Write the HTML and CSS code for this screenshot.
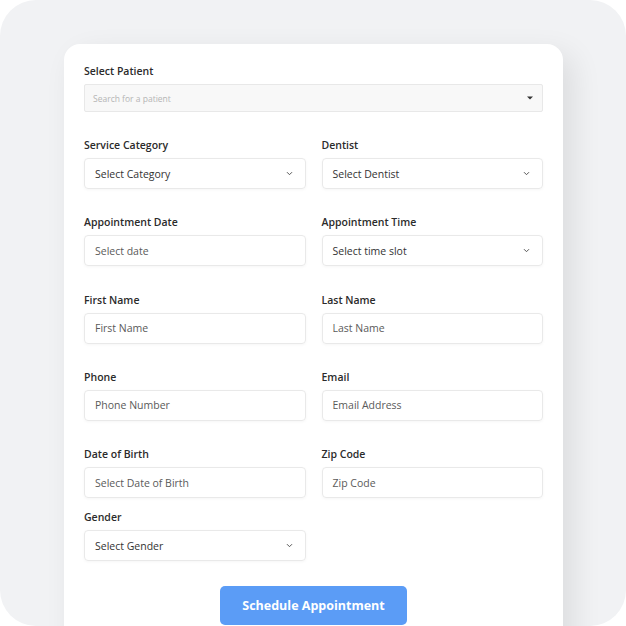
FILE: index.html
```html
<!DOCTYPE html>
<html lang="en">
<head>
  <meta charset="UTF-8">
  <title>Book Appointment</title>
  <link rel="stylesheet" href="styles.css">
</head>
<body>
  <div class="frame">
    <div class="card">
      <div class="field">
        <label>Select Patient</label>
        <div class="search-box">
          <span>Search for a patient</span>
          <svg width="6" height="4" viewBox="0 0 6 4"><path d="M0 0.5h6L3 3.5z" fill="#333"/></svg>
        </div>
      </div>

      <div class="grid">
        <div class="field">
          <label>Service Category</label>
          <div class="box select">
            <span>Select Category</span>
            <svg width="7" height="5" viewBox="0 0 7 5"><path d="M1 1.2l2.5 2.5 2.5-2.5" fill="none" stroke="#555" stroke-width="1"/></svg>
          </div>
        </div>
        <div class="field">
          <label>Dentist</label>
          <div class="box select">
            <span>Select Dentist</span>
            <svg width="7" height="5" viewBox="0 0 7 5"><path d="M1 1.2l2.5 2.5 2.5-2.5" fill="none" stroke="#555" stroke-width="1"/></svg>
          </div>
        </div>

        <div class="field">
          <label>Appointment Date</label>
          <div class="box"><span>Select date</span></div>
        </div>
        <div class="field">
          <label>Appointment Time</label>
          <div class="box select">
            <span>Select time slot</span>
            <svg width="7" height="5" viewBox="0 0 7 5"><path d="M1 1.2l2.5 2.5 2.5-2.5" fill="none" stroke="#555" stroke-width="1"/></svg>
          </div>
        </div>

        <div class="field">
          <label>First Name</label>
          <div class="box"><span>First Name</span></div>
        </div>
        <div class="field">
          <label>Last Name</label>
          <div class="box"><span>Last Name</span></div>
        </div>

        <div class="field">
          <label>Phone</label>
          <div class="box"><span>Phone Number</span></div>
        </div>
        <div class="field">
          <label>Email</label>
          <div class="box"><span>Email Address</span></div>
        </div>

        <div class="field">
          <label>Date of Birth</label>
          <div class="box"><span>Select Date of Birth</span></div>
        </div>
        <div class="field">
          <label>Zip Code</label>
          <div class="box"><span>Zip Code</span></div>
        </div>
      </div>

      <div class="grid grid-tight">
        <div class="field">
          <label>Gender</label>
          <div class="box select">
            <span>Select Gender</span>
            <svg width="7" height="5" viewBox="0 0 7 5"><path d="M1 1.2l2.5 2.5 2.5-2.5" fill="none" stroke="#555" stroke-width="1"/></svg>
          </div>
        </div>
      </div>

      <div class="actions">
        <button>Schedule Appointment</button>
      </div>
    </div>
  </div>
</body>
</html>
```

FILE: styles.css
```css
html, body {
  margin: 0;
  height: 626px;
  overflow: hidden;
  background: #fff;
}

body {
  font-family: "Open Sans", Arial, sans-serif;
  color: #222;
}

.frame {
  background: #f1f2f4;
  border-radius: 36px;
  height: 626px;
  box-sizing: border-box;
  padding: 44px 63px 0 64px;
}

.card {
  background: #fff;
  border-radius: 16px 16px 0 0;
  height: 640px;
  padding: 19px 20px 0 20px;
  box-shadow: 10px 10px 30px rgba(0,0,0,0.09);
}

.field label {
  display: block;
  font-size: 10.5px;
  font-weight: 600;
  line-height: 16px;
  margin-bottom: 5px;
  color: #2b2b2b;
}

.search-box {
  height: 28px;
  box-sizing: border-box;
  background: #f8f8f8;
  border: 1px solid #e8e8e8;
  border-radius: 2px;
  display: flex;
  align-items: center;
  justify-content: space-between;
  padding: 0 9px 0 8px;
  font-size: 8.5px;
  color: #b5b5b5;
}

.grid {
  display: grid;
  grid-template-columns: 1fr 1fr;
  column-gap: 16px;
  row-gap: 25.3px;
  margin-top: 25px;
}

.grid-tight {
  margin-top: 11px;
}

.box {
  height: 31px;
  box-sizing: border-box;
  border: 1px solid #e9e9e9;
  border-radius: 4px;
  box-shadow: 0 1px 3px rgba(0,0,0,0.04);
  display: flex;
  align-items: center;
  justify-content: space-between;
  padding: 0 12px 0 10px;
  font-size: 10.5px;
  color: #5a5a5a;
}

.box.select span {
  color: #333;
}

.actions {
  display: flex;
  justify-content: center;
  margin-top: 25px;
}

.actions button {
  width: 187px;
  height: 39px;
  background: #5b9cf6;
  border: none;
  border-radius: 5px;
  color: #fff;
  font-family: "Open Sans", Arial, sans-serif;
  font-size: 12.5px;
  font-weight: 700;
}
```
